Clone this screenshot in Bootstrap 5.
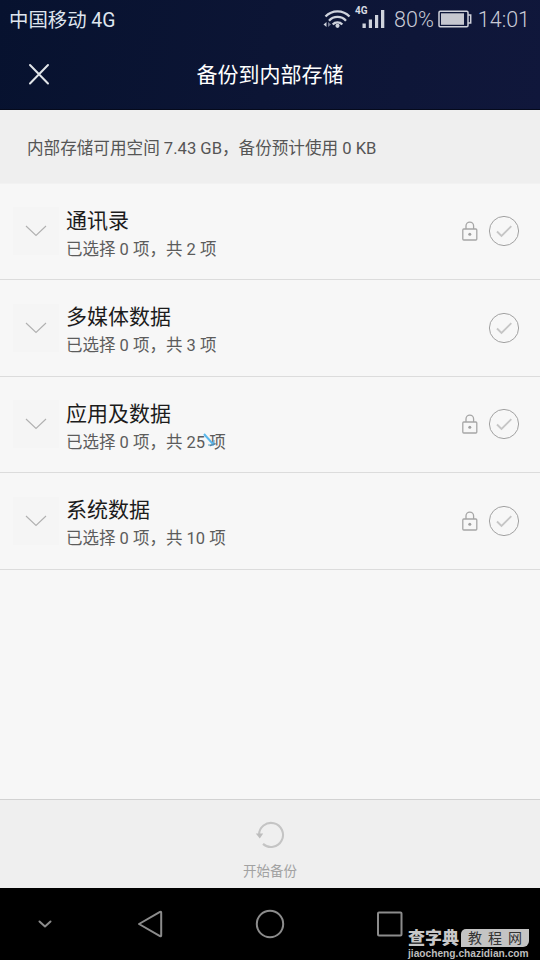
<!DOCTYPE html>
<html lang="zh-CN">
<head>
<meta charset="utf-8">
<meta name="viewport" content="width=device-width, initial-scale=1">
<title>备份到内部存储</title>
<link href="https://cdn.jsdelivr.net/npm/bootstrap@5.3.0/dist/css/bootstrap.min.css" rel="stylesheet">
<style>
  body { font-family: Roboto, "Noto Sans CJK SC", sans-serif; background: #f7f7f7; }
  svg { display: block; flex: none; }
  .screen { width: 540px; height: 960px; }
  .top-area { height: 109.5px; background: linear-gradient(100deg, #07122f, #0c1535 50%, #10173b); border-bottom: 1px solid #050a1c; }
  .status-bar { height: 40px; padding: 0 10px 0 9px; color: #c9cbd6; }
  .carrier { font-size: 19.4px; line-height: 40px; color: #dfe5ee; padding-top: 1px; }
  .status-num { font-size: 21.5px; line-height: 40px; font-weight: 300; }
  .battery { margin-left: 4px; margin-right: 6px; }
  .title-bar { height: 69px; display: grid; grid-template-columns: 78px 1fr 78px; }
  .page-title { font-size: 21px; line-height: 30px; font-weight: 400; padding-top: 1px; }
  .storage-info { height: 74px; background: #efefef; padding: 7px 0 0 27px; font-size: 16.6px; color: #555; border-bottom: 1px solid #f2f2f2; }
  .backup-row { height: 96.5px; border-bottom: 1px solid #dcdcdc; padding: 0 20px 0 13px; }
  .expander { width: 46px; height: 48px; background: #f5f5f5; margin-right: 7px; }
  .row-text { padding-top: 7px; }
  .row-title { font-size: 21px; line-height: 30px; color: #1c1c1c; }
  .row-sub { font-size: 16.5px; line-height: 28px; color: #5c5c5c; }
  .lock-icon { margin-right: 9px; }
  .pen-mark { left: 137px; top: -1px; }
  .start-bar { height: 89px; background: #efefef; border-top: 1px solid #d2d2d2; padding-top: 20px; }
  .start-label { font-size: 13.5px; line-height: 20px; color: #a2a2a2; margin-top: 11px; }
  .nav-keys { height: 72px; background: #000; }
  .brand { left: 408px; top: 41px; width: 121px; }
  .brand-name { font-family: "Noto Sans CJK SC", sans-serif; font-size: 17px; line-height: 16px; font-weight: 900; color: #c8c8c8; }
  .brand-tag { width: 68px; height: 18px; background: #c4c4c4; border-radius: 5px 0 6px 0; color: #333; font-size: 14px; line-height: 18px; padding: 0 7px; }
  .brand-url { font-family: "Liberation Sans", sans-serif; font-size: 10.2px; line-height: 10px; padding-top: 2px; color: #bdbdbd; font-weight: 700; white-space: nowrap; }
</style>
<script src="https://cdn.jsdelivr.net/npm/bootstrap@5.3.0/dist/js/bootstrap.bundle.min.js"></script>
</head>
<body>
<svg width="0" height="0" class="position-absolute" aria-hidden="true">
  <symbol id="chevron" viewBox="0 0 24 14"><path d="M2 2l10 9.500 10-9.500" fill="none" stroke="#b0b0b0" stroke-width="1.100"/></symbol>
  <symbol id="lock" viewBox="0 0 18 22"><g fill="none" stroke="#a6a6a6" stroke-width="1.300"><rect x="1.800" y="9" width="14" height="11" rx="1"/><path d="M5 9V6a3.800 3.800 0 0 1 7.600 0v3"/></g><circle cx="8.800" cy="14.300" r="1.500" fill="#a0a0a0"/></symbol>
  <symbol id="check" viewBox="0 0 32 32"><circle cx="16" cy="16" r="14.600" fill="none" stroke="#a2a2a2"/><path d="M9 16.500l4.500 4.500 9.800-9.800" fill="none" stroke="#c6c6c6" stroke-width="1.900"/></symbol>
</svg>
<main class="screen d-flex flex-column overflow-hidden">
  <header class="top-area flex-shrink-0">
    <div class="status-bar d-flex align-items-center justify-content-between">
      <span class="carrier">中国移动 4G</span>
      <div class="d-flex align-items-center">
        <svg width="73" height="36" viewBox="0 0 73 36">
          <g fill="none" stroke="#cfd3dc" stroke-width="2.300"><path d="M4.500 14.500a16.500 16.500 0 0 1 24 0"/><path d="M8 18.700a11.500 11.500 0 0 1 17 0"/><path d="M11.700 22.500a6.500 6.500 0 0 1 9.600 0"/></g>
          <circle cx="16.500" cy="23.800" r="2.100" fill="#cfd3dc"/>
          <path d="M5.500 20v5L2.500 22.500z" fill="#cfd3dc"/><path d="M7 20v5l3-2.500z" fill="#747b91"/>
          <text x="34" y="12" font-family="Roboto" font-size="10" font-weight="700" fill="#d8dbe3">4G</text>
          <path d="M41.500 21.500h3.300v4.500h-3.300zM47.800 17.500h3.200V26h-3.200zM54 13h3.200v13H54zM60 8h3.300v18H60z" fill="#cfd3dc"/>
        </svg>
        <span class="status-num">80%</span>
        <svg class="battery" width="34" height="20" viewBox="0 0 34 20"><rect x="1" y="1.200" width="29" height="15.500" rx="1.200" fill="none" stroke="#cfd1da" stroke-width="1.500"/><path d="M3 3.300h23v11.500H3z" fill="#c6c7cf"/><path d="M30 5h2.700v8H30" fill="none" stroke="#cfd1da" stroke-width="1.500"/></svg>
        <span class="status-num">14:01</span>
      </div>
    </div>
    <div class="title-bar align-items-center">
      <svg class="mx-auto" width="24" height="24" viewBox="0 0 24 24"><path d="M3 2l18 18.500M21 2L3 20.500" stroke="#e1e5e8" stroke-width="2" stroke-linecap="round"/></svg>
      <h1 class="page-title text-white text-center m-0">备份到内部存储</h1>
    </div>
  </header>
  <section class="storage-info d-flex align-items-center flex-shrink-0">内部存储可用空间 7.43 GB，备份预计使用 0 KB</section>
  <section class="flex-grow-1">
    <div class="backup-row d-flex align-items-center">
      <div class="expander d-flex align-items-center justify-content-center"><svg width="24" height="14"><use href="#chevron"/></svg></div>
      <div class="row-text flex-grow-1"><div class="row-title">通讯录</div><div class="row-sub">已选择 0 项，共 2 项</div></div>
      <svg class="lock-icon" width="18" height="22"><use href="#lock"/></svg>
      <svg width="32" height="32"><use href="#check"/></svg>
    </div>
    <div class="backup-row d-flex align-items-center">
      <div class="expander d-flex align-items-center justify-content-center"><svg width="24" height="14"><use href="#chevron"/></svg></div>
      <div class="row-text flex-grow-1"><div class="row-title">多媒体数据</div><div class="row-sub">已选择 0 项，共 3 项</div></div>
      <svg width="32" height="32"><use href="#check"/></svg>
    </div>
    <div class="backup-row d-flex align-items-center">
      <div class="expander d-flex align-items-center justify-content-center"><svg width="24" height="14"><use href="#chevron"/></svg></div>
      <div class="row-text flex-grow-1"><div class="row-title">应用及数据</div><div class="row-sub position-relative">已选择 0 项，共 25 项<svg class="pen-mark position-absolute" width="16" height="20" viewBox="0 0 16 20"><path d="M1 6l9 10" stroke="#5bb8ec" stroke-width="2"/><path d="M5 17h6v-5" fill="none" stroke="#4c9ed2"/></svg></div></div>
      <svg class="lock-icon" width="18" height="22"><use href="#lock"/></svg>
      <svg width="32" height="32"><use href="#check"/></svg>
    </div>
    <div class="backup-row d-flex align-items-center">
      <div class="expander d-flex align-items-center justify-content-center"><svg width="24" height="14"><use href="#chevron"/></svg></div>
      <div class="row-text flex-grow-1"><div class="row-title">系统数据</div><div class="row-sub">已选择 0 项，共 10 项</div></div>
      <svg class="lock-icon" width="18" height="22"><use href="#lock"/></svg>
      <svg width="32" height="32"><use href="#check"/></svg>
    </div>
  </section>
  <div class="start-bar d-flex flex-column align-items-center flex-shrink-0">
    <svg width="30" height="30" viewBox="0 0 30 30"><path d="M4 15a12 12 0 1 1 4 8.900" fill="none" stroke="#c4c4c4" stroke-width="2.100"/><path d="M.8 13.500h7.400l-3.400 5z" fill="#bdbdbd"/></svg>
    <span class="start-label">开始备份</span>
  </div>
  <footer class="nav-keys position-relative flex-shrink-0">
    <svg width="540" height="72" viewBox="0 0 540 72"><g fill="none" stroke="#8c8c8c" stroke-width="2" stroke-linejoin="round" stroke-linecap="round"><path d="M39.500 33.500l5.500 5 5.500-5"/><path d="M139 36l21-12.200q1.200-.5 1.200 1v22.400q0 1.500-1.200 1z"/><circle cx="270" cy="36" r="13.200"/><rect x="378" y="24.500" width="23.500" height="23" rx="1"/></g></svg>
    <div class="brand position-absolute">
      <div class="d-flex justify-content-between"><span class="brand-name">查字典</span><span class="brand-tag d-flex justify-content-between"><span>教</span><span>程</span><span>网</span></span></div>
      <div class="brand-url">jiaocheng.chazidian.com</div>
    </div>
  </footer>
</main>
</body>
</html>
